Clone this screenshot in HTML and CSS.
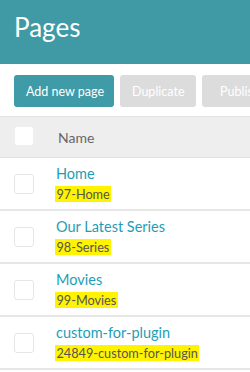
FILE: index.html
```html
<!DOCTYPE html>
<html>
<head>
<meta charset="utf-8">
<link rel="stylesheet" href="styles.css">
</head>
<body>
<header class="hdr"><h1 class="title">Pages</h1></header>
<div class="toolbar">
  <button class="btn primary">Add new page</button>
  <button class="btn disabled">Duplicate</button>
  <button class="btn disabled">Publish</button>
</div>
<div class="table">
  <div class="row head">
    <span class="cb head-cb"></span>
    <span class="colname">Name</span>
  </div>
  <div class="row">
    <span class="cb"></span>
    <div class="cell"><a class="link">Home</a><span class="slug">97-Home</span></div>
  </div>
  <div class="row">
    <span class="cb"></span>
    <div class="cell"><a class="link">Our Latest Series</a><span class="slug">98-Series</span></div>
  </div>
  <div class="row">
    <span class="cb"></span>
    <div class="cell"><a class="link">Movies</a><span class="slug">99-Movies</span></div>
  </div>
  <div class="row">
    <span class="cb"></span>
    <div class="cell"><a class="link">custom-for-plugin</a><span class="slug">24849-custom-for-plugin</span></div>
  </div>
</div>
</body>
</html>
```
FILE: styles.css
```css
* { box-sizing: border-box; }
html, body { margin: 0; padding: 0; background: #fff; overflow: hidden; }
body { font-family: Lato, "Open Sans", sans-serif; width: 250px; }
.hdr { background: #3f9aa6; height: 64px; padding: 0 14px; display: flex; align-items: center; }
.title { margin: 0; color: #fff; font-weight: 400; font-size: 26px; line-height: 1; position: relative; top: -5px; }
.toolbar { display: flex; gap: 6px; padding: 11px 14px 9px; white-space: nowrap; border-bottom: 1px solid #e4e4e4; overflow: hidden; }
.btn { flex: none; height: 32px; border: none; border-radius: 3px; font-family: inherit; font-size: 12.5px; color: #fff; padding: 0 12px; }
.btn.primary { background: #3f9ba7; width: 100px; }
.btn.disabled { background: #dcdcdc; width: 76px; }
.table { display: flex; flex-direction: column; }
.row { display: flex; align-items: center; height: 53px; border-bottom: 2px solid #e6e6e6; padding-left: 14px; }
.row.head { background: #eeeeee; height: 41px; border-bottom: 1px solid #e2e2e2; }
.cb { width: 20px; height: 20px; border: 1px solid #e6e6e6; border-radius: 3px; background: #fff; flex: none; }
.head-cb { border-color: #eee; position: relative; top: -1px; }
.colname { margin-left: 24px; color: #666; font-size: 14px; }
.cell { margin-left: 22px; display: flex; flex-direction: column; align-items: flex-start; }
.link { color: #1e9eb6; font-size: 14.5px; line-height: 18px; }
.slug { background: #fff300; color: #555; font-size: 12.7px; line-height: 16px; padding: 0 1.5px; margin-top: 3px; margin-left: -1px; }
```
